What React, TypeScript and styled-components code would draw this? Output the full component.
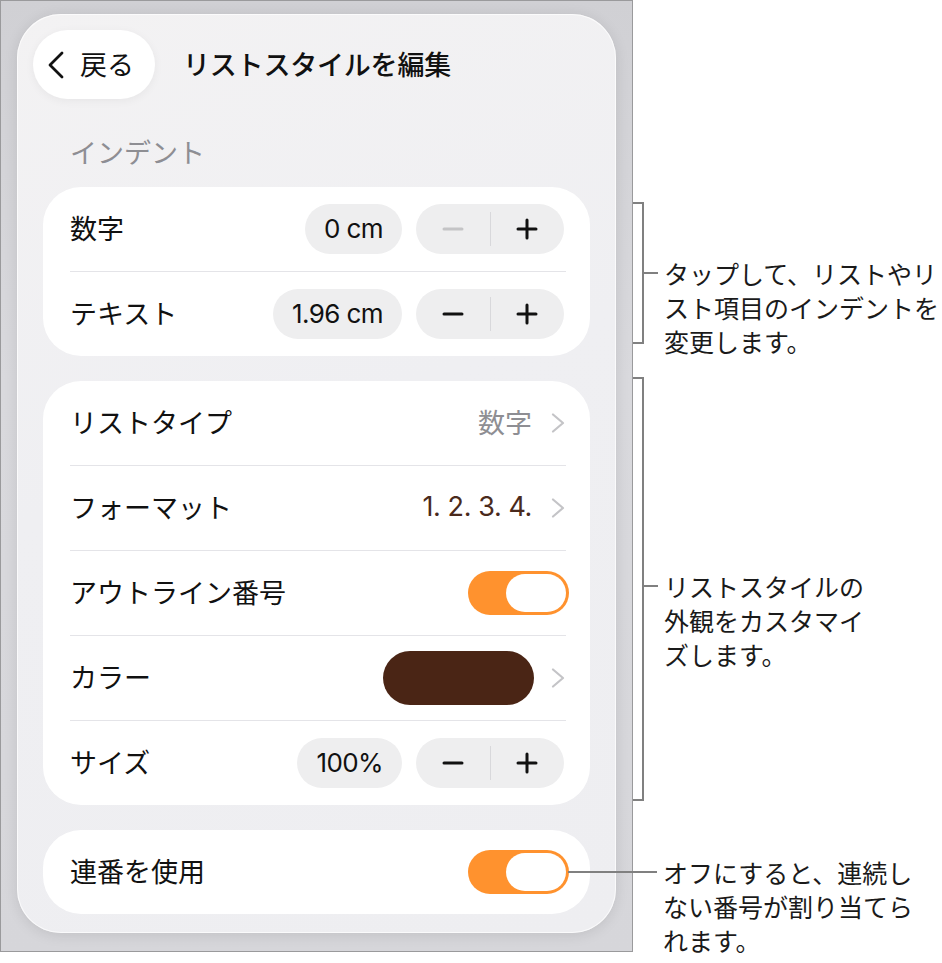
import React from "react";
import styled, { createGlobalStyle } from "styled-components";

const GlobalStyle = createGlobalStyle`
  html, body {
    margin: 0;
    padding: 0;
    background: #ffffff;
  }
  body {
    font-family: "Noto Sans CJK JP", "Noto Sans", sans-serif;
    color: #111111;
  }
`;

const BackChevron = () => (
  <svg width="20" height="28" viewBox="0 0 20 28" fill="none">
    <polyline
      points="16,2 4,14 16,26"
      stroke="#111"
      strokeWidth="2.8"
      strokeLinecap="round"
      strokeLinejoin="round"
    />
  </svg>
);

const NextChevron = () => (
  <svg width="14" height="20" viewBox="0 0 14 20" fill="none">
    <polyline
      points="2,1.5 12,10 2,18.5"
      stroke="#c4c4c7"
      strokeWidth="2.2"
      strokeLinecap="round"
      strokeLinejoin="round"
    />
  </svg>
);

const MinusIcon = ({ disabled }: { disabled?: boolean }) => (
  <svg width="22" height="22" viewBox="0 0 22 22">
    <line
      x1="2"
      y1="11"
      x2="20"
      y2="11"
      stroke={disabled ? "#c4c4c6" : "#111"}
      strokeWidth="3"
      strokeLinecap="round"
    />
  </svg>
);

const PlusIcon = () => (
  <svg width="22" height="22" viewBox="0 0 22 22">
    <line x1="2" y1="11" x2="20" y2="11" stroke="#111" strokeWidth="3" strokeLinecap="round" />
    <line x1="11" y1="2" x2="11" y2="20" stroke="#111" strokeWidth="3" strokeLinecap="round" />
  </svg>
);

const App = () => {
  return (
    <>
      <GlobalStyle />
      <Page>
        <Frame>
          <Panel>
            <Header>
              <BackButton>
                <BackChevron />
                <span>戻る</span>
              </BackButton>
              <Title>リストスタイルを編集</Title>
            </Header>

            <Content>
              <SectionLabel>インデント</SectionLabel>

              {/* インデント */}
              <Card>
                <Row>
                  <RowLabel>数字</RowLabel>
                  <Controls>
                    <ValuePill>0 cm</ValuePill>
                    <Stepper>
                      <StepButton>
                        <MinusIcon disabled />
                      </StepButton>
                      <StepDivider />
                      <StepButton>
                        <PlusIcon />
                      </StepButton>
                    </Stepper>
                  </Controls>
                </Row>
                <Divider />
                <Row>
                  <RowLabel>テキスト</RowLabel>
                  <Controls>
                    <ValuePill>1.96 cm</ValuePill>
                    <Stepper>
                      <StepButton>
                        <MinusIcon />
                      </StepButton>
                      <StepDivider />
                      <StepButton>
                        <PlusIcon />
                      </StepButton>
                    </Stepper>
                  </Controls>
                </Row>
              </Card>

              {/* 外観 */}
              <Card $gap={25}>
                <Row>
                  <RowLabel>リストタイプ</RowLabel>
                  <Detail>
                    <DetailValue $tone="muted">数字</DetailValue>
                    <NextChevron />
                  </Detail>
                </Row>
                <Divider />
                <Row>
                  <RowLabel>フォーマット</RowLabel>
                  <Detail>
                    <DetailValue $tone="brown">1. 2. 3. 4.</DetailValue>
                    <NextChevron />
                  </Detail>
                </Row>
                <Divider />
                <Row>
                  <RowLabel>アウトライン番号</RowLabel>
                  <Toggle>
                    <Knob />
                  </Toggle>
                </Row>
                <Divider />
                <Row>
                  <RowLabel>カラー</RowLabel>
                  <Detail $gap={17}>
                    <Swatch $color="#4a2515" />
                    <NextChevron />
                  </Detail>
                </Row>
                <Divider />
                <Row>
                  <RowLabel>サイズ</RowLabel>
                  <Controls>
                    <ValuePill>100%</ValuePill>
                    <Stepper>
                      <StepButton>
                        <MinusIcon />
                      </StepButton>
                      <StepDivider />
                      <StepButton>
                        <PlusIcon />
                      </StepButton>
                    </Stepper>
                  </Controls>
                </Row>
              </Card>

              <Card $gap={25}>
                <Row>
                  <RowLabel>連番を使用</RowLabel>
                  <Toggle>
                    <Knob />
                  </Toggle>
                </Row>
              </Card>
            </Content>
          </Panel>
        </Frame>

        <Notes>
          <Callout $top={202}>
            <Bracket $height={142} />
            <Tail $offset={54}>
              <Tick />
              <NoteText>
                タップして、リストやリ
                <br />
                スト項目のインデントを
                <br />
                変更します。
              </NoteText>
            </Tail>
          </Callout>

          <Callout $top={19}>
            <Bracket $height={424} />
            <Tail $offset={192}>
              <Tick />
              <NoteText>
                リストスタイルの
                <br />
                外観をカスタマイ
                <br />
                ズします。
              </NoteText>
            </Tail>
          </Callout>

          <Callout $top={54}>
            <Leader />
            <NoteText $indent={30}>
              オフにすると、連続し
              <br />
              ない番号が割り当てら
              <br />
              れます。
            </NoteText>
          </Callout>
        </Notes>
      </Page>
    </>
  );
};

export default App;

const Page = styled.div`
  display: flex;
  align-items: flex-start;
  width: 942px;
  height: 963px;
  overflow: hidden;
`;

const Frame = styled.div`
  box-sizing: border-box;
  width: 633px;
  height: 952px;
  flex-shrink: 0;
  border: 1px solid #9a9a9c;
  padding: 13px 16px 18px 16px;
  background: linear-gradient(180deg, #d0d0d4 0%, #d9d9dd 40%, #d6d6da 100%);
  display: flex;
`;

const Panel = styled.div`
  flex: 1;
  display: flex;
  flex-direction: column;
  padding: 16px 16px 18px;
  border-radius: 44px;
  background: linear-gradient(160deg, #f3f2f3 0%, #efeff2 45%, #eeeef1 100%);
  box-shadow: 0 2px 14px rgba(0, 0, 0, 0.1), inset 0 0 0 1px rgba(255, 255, 255, 0.7);
`;

const Header = styled.div`
  display: flex;
  align-items: center;
  gap: 28px;
  height: 69px;
`;

const BackButton = styled.div`
  display: flex;
  align-items: center;
  gap: 14px;
  box-sizing: border-box;
  height: 69px;
  width: 122px;
  padding-left: 13px;
  border-radius: 35px;
  background: #ffffff;
  box-shadow: 0 2px 10px rgba(0, 0, 0, 0.05);
  font-size: 27px;
  color: #111;

  span {
    line-height: 1;
    margin-top: -2px;
  }
`;

const Title = styled.h1`
  margin: 0 0 2px;
  font-size: 27px;
  font-weight: 500;
  color: #111;
  letter-spacing: -0.2px;
`;

const Content = styled.div`
  display: flex;
  flex-direction: column;
  padding: 0 10px;
`;

const SectionLabel = styled.div`
  margin-top: 36px;
  padding-left: 27px;
  height: 34px;
  line-height: 34px;
  font-size: 27px;
  color: #8e8e93;
`;

const Card = styled.div<{ $gap?: number }>`
  margin-top: ${({ $gap }) => $gap ?? 18}px;
  background: #ffffff;
  border-radius: 38px;
  display: flex;
  flex-direction: column;
`;

const Row = styled.div`
  box-sizing: border-box;
  height: 84px;
  padding: 0 21px 0 27px;
  display: flex;
  align-items: center;
  justify-content: space-between;
`;

const RowLabel = styled.span`
  font-size: 27px;
  color: #111;
  white-space: nowrap;
  margin-bottom: 3px;
`;

const Divider = styled.div`
  height: 1px;
  margin: 0 24px 0 27px;
  background: #e4e4e8;
`;

const Controls = styled.div`
  display: flex;
  align-items: center;
  gap: 14px;
  margin-right: 5px;
`;

const ValuePill = styled.div`
  height: 50px;
  padding: 0 19px 2px;
  box-sizing: border-box;
  border-radius: 25px;
  background: #eeeeef;
  display: flex;
  align-items: center;
  font-family: Inter, "Noto Sans", sans-serif;
  font-size: 26px;
  letter-spacing: -0.6px;
  color: #111;
`;

const Stepper = styled.div`
  width: 148px;
  height: 50px;
  border-radius: 25px;
  background: #eeeeef;
  display: grid;
  grid-template-columns: 1fr 1px 1fr;
  align-items: center;
`;

const StepButton = styled.div`
  display: flex;
  align-items: center;
  justify-content: center;
  height: 100%;
`;

const StepDivider = styled.div`
  height: 34px;
  background: #d8d8db;
`;

const Detail = styled.div<{ $gap?: number }>`
  display: flex;
  align-items: center;
  gap: ${({ $gap }) => $gap ?? 19}px;
  margin-right: 4px;
`;

const DetailValue = styled.span<{ $tone: "muted" | "brown" }>`
  font-size: 27px;
  margin-bottom: 3px;
  font-family: ${({ $tone }) =>
    $tone === "brown" ? 'Inter, "Noto Sans", sans-serif' : '"Noto Sans CJK JP", sans-serif'};
  letter-spacing: ${({ $tone }) => ($tone === "brown" ? "-0.4px" : "0")};
  color: ${({ $tone }) => ($tone === "brown" ? "#4a2a1c" : "#8e8e93")};
`;

const Toggle = styled.div`
  box-sizing: border-box;
  width: 101px;
  height: 44px;
  border-radius: 22px;
  background: #ff922e;
  padding: 3px;
  display: flex;
  justify-content: flex-end;
`;

const Knob = styled.div`
  width: 60px;
  height: 38px;
  border-radius: 19px;
  background: #ffffff;
`;

const Swatch = styled.div<{ $color: string }>`
  width: 151px;
  height: 54px;
  border-radius: 27px;
  background: ${({ $color }) => $color};
`;

const Notes = styled.div`
  display: flex;
  flex-direction: column;
  width: 309px;
  flex-shrink: 0;
`;

const Callout = styled.div<{ $top: number }>`
  position: relative;
  display: flex;
  align-items: flex-start;
  margin-top: ${({ $top }) => $top}px;
`;

const Bracket = styled.div<{ $height: number }>`
  box-sizing: border-box;
  width: 11px;
  height: ${({ $height }) => $height}px;
  border: 2px solid #808080;
  border-left: none;
  flex-shrink: 0;
`;

const Tail = styled.div<{ $offset: number }>`
  display: flex;
  align-items: flex-start;
  margin-top: ${({ $offset }) => $offset}px;
`;

const Tick = styled.div`
  width: 14px;
  height: 2px;
  margin-top: 16px;
  background: #808080;
  flex-shrink: 0;
`;

const NoteText = styled.div<{ $indent?: number }>`
  margin-left: ${({ $indent }) => $indent ?? 6}px;
  font-family: "Noto Sans CJK JP", sans-serif;
  font-size: 25px;
  line-height: 34px;
  color: #1a1a1a;
  white-space: nowrap;
`;

const Leader = styled.div`
  position: absolute;
  left: -65px;
  top: 16px;
  width: 89px;
  height: 2px;
  background: #808080;
`;
